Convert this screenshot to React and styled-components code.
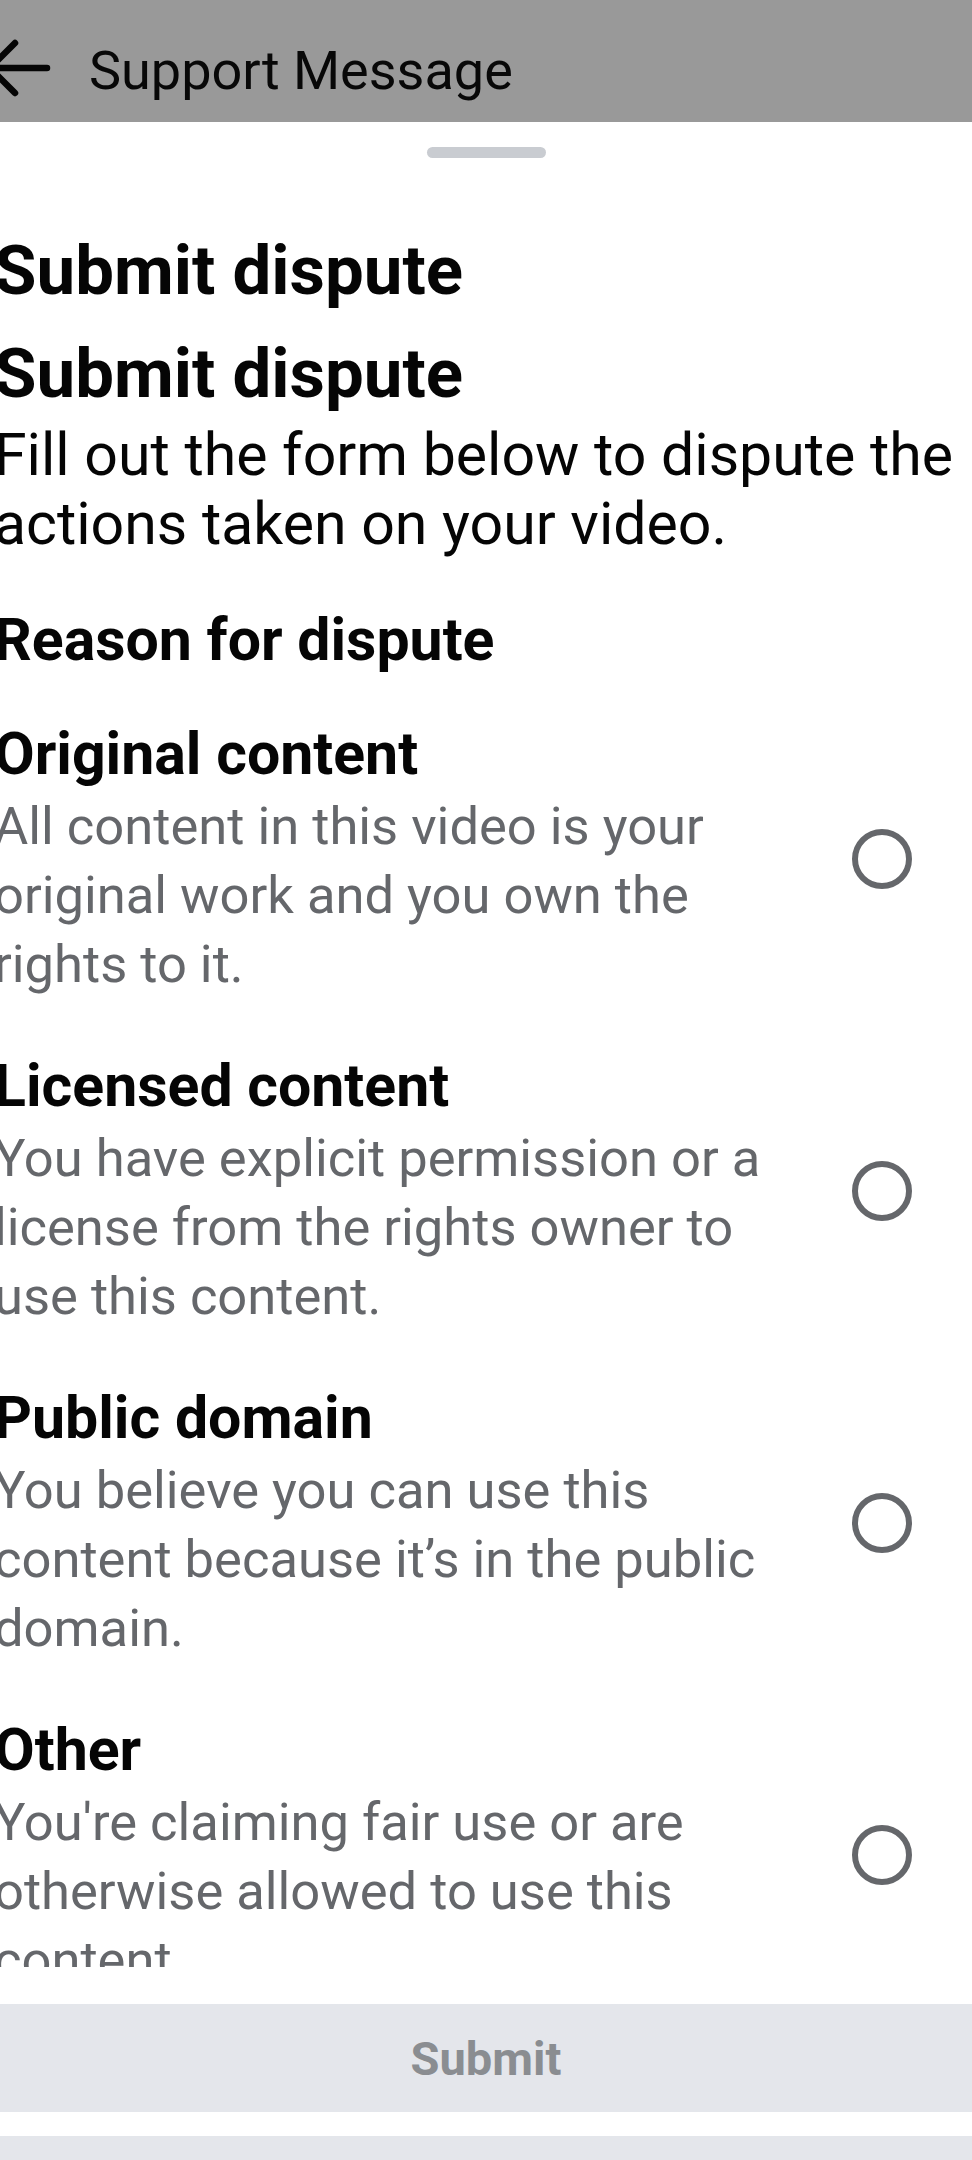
import React from 'react';
import styled, { createGlobalStyle } from 'styled-components';

const GlobalStyle = createGlobalStyle`
  html, body {
    margin: 0;
    padding: 0;
    background: #ffffff;
  }
  body {
    font-family: Roboto, 'Liberation Sans', sans-serif;
    -webkit-font-smoothing: antialiased;
  }
`;

const Page = styled.div`
  width: 972px;
  height: 2160px;
  display: flex;
  flex-direction: column;
  overflow: hidden;
  background: #ffffff;
`;

/* dimmed app bar behind the bottom sheet */
const Header = styled.header`
  flex: none;
  height: 122px;
  box-sizing: border-box;
  padding-top: 20px;
  display: flex;
  align-items: center;
  background: #999999;
`;

const BackIcon = styled.svg`
  flex: none;
  width: 48px;
  height: 60px;
  overflow: visible;
  margin-bottom: 6px;
`;

const HeaderTitle = styled.h1`
  margin: 0 0 0 41px;
  font-size: 54px;
  line-height: 1.172;
  font-weight: 400;
  color: #080808;
`;

const Sheet = styled.section`
  flex: 1;
  min-height: 0;
  display: flex;
  flex-direction: column;
`;

const Handle = styled.div`
  flex: none;
  width: 119px;
  height: 11px;
  border-radius: 6px;
  background: #c9ccd1;
  margin: 25px auto 0;
`;

const Scroller = styled.div`
  flex: 1;
  min-height: 0;
  overflow: hidden;
  margin-left: -6px;
  padding-top: 72px;
`;

const Heading = styled.h2`
  margin: ${(p) => (p.$second ? '21px' : '0')} 0 0;
  font-size: 69px;
  line-height: 82px;
  font-weight: 700;
  color: #050505;
`;

const Intro = styled.p`
  margin: 5px 0 0;
  font-size: 59px;
  line-height: 69px;
  color: #050505;
`;

const SectionLabel = styled.h3`
  margin: 47px 0 0;
  font-size: 59px;
  line-height: 69px;
  font-weight: 700;
  color: #050505;
`;

const OptionList = styled.div`
  margin-top: 45px;
  display: flex;
  flex-direction: column;
  gap: 52px;
`;

const Option = styled.label`
  display: flex;
  align-items: center;
  gap: 58px;
  padding-right: 60px;
`;

const OptionText = styled.div`
  flex: 1;
  min-width: 0;
`;

const OptionTitle = styled.div`
  font-size: 59px;
  line-height: 69px;
  font-weight: 700;
  color: #050505;
`;

const OptionDesc = styled.div`
  margin-top: 4px;
  font-size: 52.5px;
  line-height: 69px;
  color: #65676b;
`;

const Radio = styled.span`
  flex: none;
  width: 60px;
  height: 60px;
  box-sizing: border-box;
  border: 6px solid #65676b;
  border-radius: 50%;
`;

const Footer = styled.footer`
  flex: none;
  padding-top: 37px;
  display: flex;
  flex-direction: column;
  gap: 24px;
`;

const SubmitButton = styled.button`
  height: 108px;
  width: 100%;
  border: none;
  border-radius: 0;
  background: #e4e6eb;
  font-family: Roboto, 'Liberation Sans', sans-serif;
  font-size: 47px;
  font-weight: 700;
  color: #8a8d91;
  padding: 0;
`;

const NextBar = styled.div`
  height: 24px;
  background: #e4e6eb;
`;

const reasons = [
  {
    title: 'Original content',
    desc: 'All content in this video is your original work and you own the rights to it.',
  },
  {
    title: 'Licensed content',
    desc: 'You have explicit permission or a license from the rights owner to use this content.',
  },
  {
    title: 'Public domain',
    desc: 'You believe you can use this content because it’s in the public domain.',
  },
  {
    title: 'Other',
    desc: "You're claiming fair use or are otherwise allowed to use this content.",
  },
];

const App = () => {
  return (
    <Page>
      <GlobalStyle />
      <Header>
        <BackIcon viewBox="0 0 48 60">
          <path
            d="M47 30 H-9 M15 5 L-10 30 L15 55"
            fill="none"
            stroke="#050505"
            strokeWidth="6.5"
            strokeLinecap="round"
            strokeLinejoin="round"
          />
        </BackIcon>
        <HeaderTitle>Support Message</HeaderTitle>
      </Header>
      <Sheet>
        <Handle />
        <Scroller>
          <Heading>Submit dispute</Heading>
          <Heading $second>Submit dispute</Heading>
          <Intro>Fill out the form below to dispute the actions taken on your video.</Intro>
          <SectionLabel>Reason for dispute</SectionLabel>
          <OptionList>
            {reasons.map((r) => (
              <Option key={r.title}>
                <OptionText>
                  <OptionTitle>{r.title}</OptionTitle>
                  <OptionDesc>{r.desc}</OptionDesc>
                </OptionText>
                <Radio />
              </Option>
            ))}
          </OptionList>
        </Scroller>
        <Footer>
          <SubmitButton>Submit</SubmitButton>
          <NextBar />
        </Footer>
      </Sheet>
    </Page>
  );
};

export default App;
